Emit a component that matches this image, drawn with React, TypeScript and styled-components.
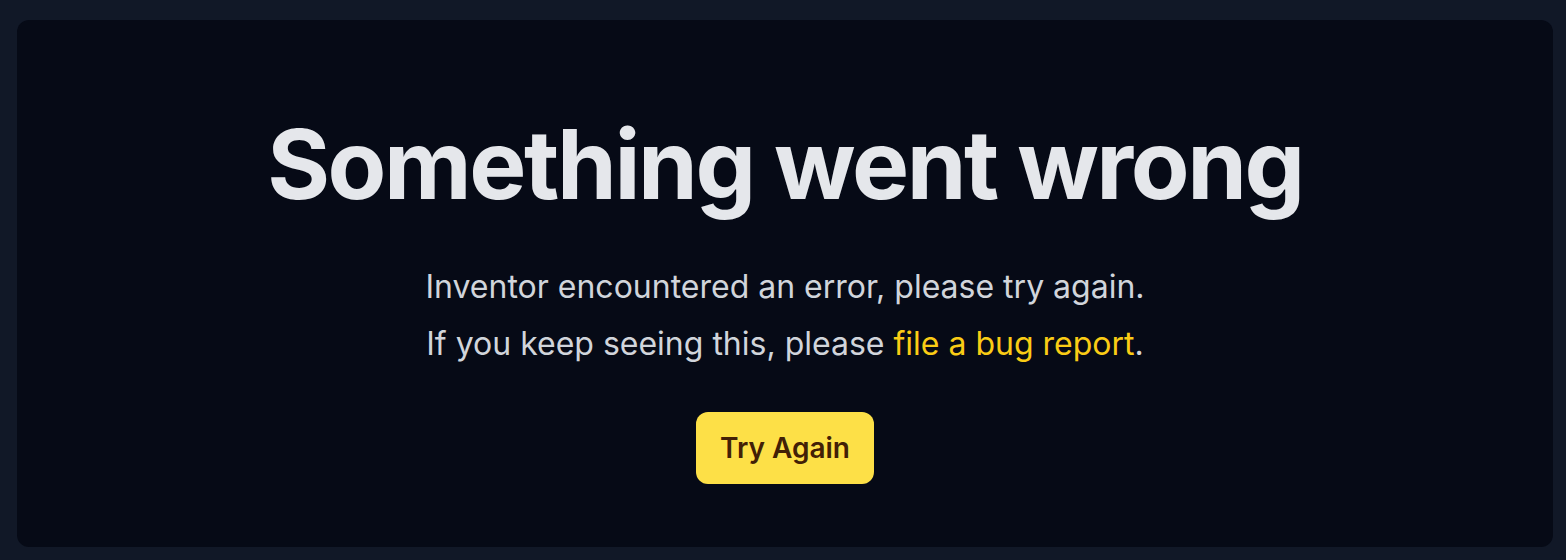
import React from 'react';
import styled, { createGlobalStyle } from 'styled-components';

const GlobalStyle = createGlobalStyle`
  html, body {
    margin: 0;
    padding: 0;
    background: #111827;
  }
  body {
    font-family: Inter, "Noto Sans", sans-serif;
  }
`;

const Page = styled.div`
  box-sizing: border-box;
  height: 560px;
  padding: 20px 13px 13px 17px;
  display: flex;
`;

const Card = styled.main`
  flex: 1;
  background: #060a16;
  border-radius: 12px;
  display: flex;
  flex-direction: column;
  align-items: center;
  padding-top: 96px;
`;

const Title = styled.h1`
  margin: 0;
  font-size: 96px;
  line-height: 1;
  font-weight: 700;
  letter-spacing: -0.025em;
  color: #e5e7eb;
`;

const Message = styled.p<{ $first?: boolean }>`
  margin: ${(p) => (p.$first ? '57px 0 0' : '21px 0 0')};
  font-size: 32px;
  line-height: 36px;
  color: #d1d5db;
`;

const BugLink = styled.a`
  color: #facc15;
  text-decoration: none;
`;

const RetryButton = styled.button`
  margin-top: 50px;
  height: 72px;
  padding: 0 24px;
  border: none;
  border-radius: 12px;
  background: #fde047;
  color: #422006;
  font-family: inherit;
  font-size: 28px;
  font-weight: 600;
  cursor: pointer;
`;

export default function App() {
  return (
    <>
      <GlobalStyle />
      <Page>
        <Card>
          <Title>Something went wrong</Title>
          <Message $first>Inventor encountered an error, please try again.</Message>
          <Message>
            If you keep seeing this, please <BugLink href="#">file a bug report</BugLink>.
          </Message>
          <RetryButton type="button">Try Again</RetryButton>
        </Card>
      </Page>
    </>
  );
}
